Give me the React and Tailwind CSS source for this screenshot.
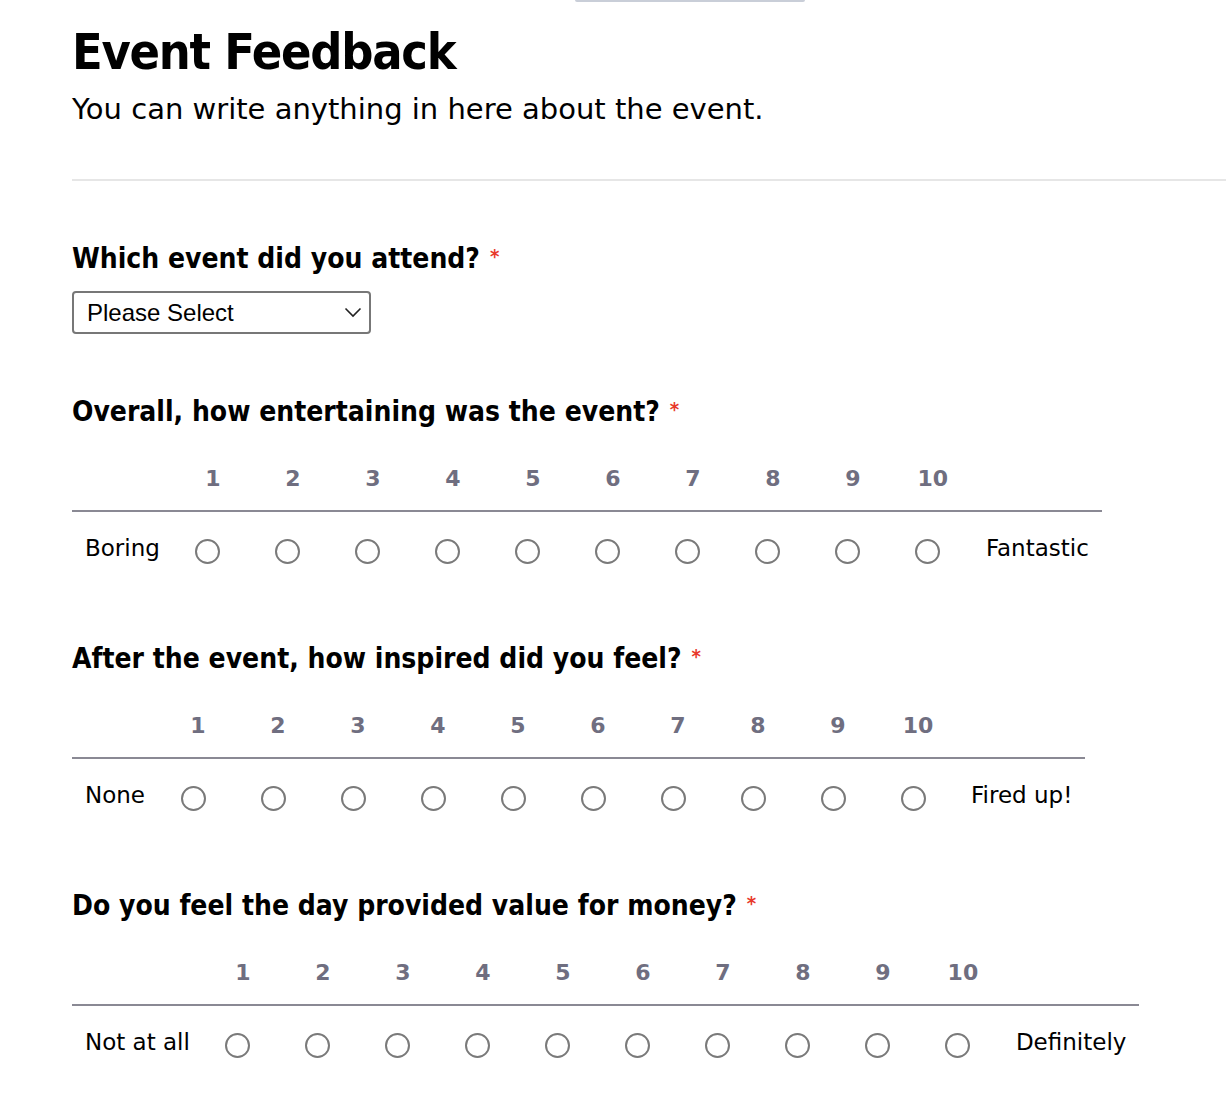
import { useState } from 'react'

const QUESTIONS = [
  { title: 'Overall, how entertaining was the event?', low: 'Boring', high: 'Fantastic' },
  { title: 'After the event, how inspired did you feel?', low: 'None', high: 'Fired up!' },
  { title: 'Do you feel the day provided value for money?', low: 'Not at all', high: 'Definitely' },
]

const SCALE = [1, 2, 3, 4, 5, 6, 7, 8, 9, 10]

const condensed = { fontFamily: '"DejaVu Sans Condensed", "DejaVu Sans", sans-serif' }

function Label({ children }) {
  return (
    <div className="flex h-[35px] items-center text-[28px] font-bold text-black" style={condensed}>
      <span>{children}</span>
      <span className="ml-[10px] -mt-[6px] text-[20px] font-bold text-[#e8392b]">*</span>
    </div>
  )
}

function Radio({ checked, onClick }) {
  return (
    <button
      type="button"
      onClick={onClick}
      className="flex h-[25px] w-[25px] items-center justify-center rounded-full border-2 border-[#7a7a7a] bg-white"
    >
      {checked && <span className="h-[13px] w-[13px] rounded-full bg-[#444]" />}
    </button>
  )
}

function Scale({ q, first }) {
  const [val, setVal] = useState(null)
  return (
    <div className={first ? 'mt-[60px]' : 'mt-[51px]'}>
      <Label>{q.title}</Label>
      <div className="mt-[29px] inline-grid grid-cols-[auto_repeat(10,80px)_auto]">
        <div />
        {SCALE.map(n => (
          <div key={n} className="flex h-[40px] items-center justify-center pl-[10px] text-[22px] font-bold text-[#6f6e80]">{n}</div>
        ))}
        <div />
        <div className="col-span-12 mt-[12px] h-[2px] bg-[#8a8994]" />
        <div className="flex h-[78px] items-center pb-[6px] pl-[13px] pr-[8px] text-[23px]">{q.low}</div>
        {SCALE.map(n => (
          <div key={n} className="flex h-[78px] items-center justify-center">
            <Radio checked={val === n} onClick={() => setVal(n)} />
          </div>
        ))}
        <div className="flex h-[78px] items-center pb-[6px] pl-[18px] pr-[13px] text-[23px]">{q.high}</div>
      </div>
    </div>
  )
}

export default function App() {
  return (
    <div className="min-h-screen bg-white text-black" style={{ fontFamily: '"DejaVu Sans", sans-serif' }}>
      <div className="ml-[575px] h-[2px] w-[230px] rounded-b bg-[#c9ced8]" />
      <div className="pl-[72px]">
        <h1 className="mt-[25px] text-[50px] font-bold leading-none tracking-tight" style={condensed}>
          Event Feedback
        </h1>
        <p className="mt-[14px] text-[29px] leading-tight">
          You can write anything in here about the event.
        </p>
        <div className="mt-[52px] h-[2px] bg-[#e6e6e6]" />

        <div className="mt-[60px]">
          <Label>Which event did you attend?</Label>
          <div className="relative mt-[15px] w-[299px]">
            <select
              className="h-[43px] w-full appearance-none rounded-[4px] border-2 border-[#777] bg-white pl-[13px] text-[24px] text-black"
              style={{ fontFamily: '"Liberation Sans", Arial, sans-serif' }}
              defaultValue=""
            >
              <option value="">Please Select</option>
              <option>Spring Conference</option>
              <option>Summer Workshop</option>
            </select>
            <svg className="pointer-events-none absolute right-[9px] top-[16px]" width="18" height="11" viewBox="0 0 18 11" fill="none">
              <path d="M1.5 1.5 L9 9 L16.5 1.5" stroke="#222" strokeWidth="1.6" />
            </svg>
          </div>
        </div>

        <div className="pb-[40px]">
          {QUESTIONS.map((q, i) => (
            <Scale key={i} q={q} first={i === 0} />
          ))}
        </div>
      </div>
    </div>
  )
}
